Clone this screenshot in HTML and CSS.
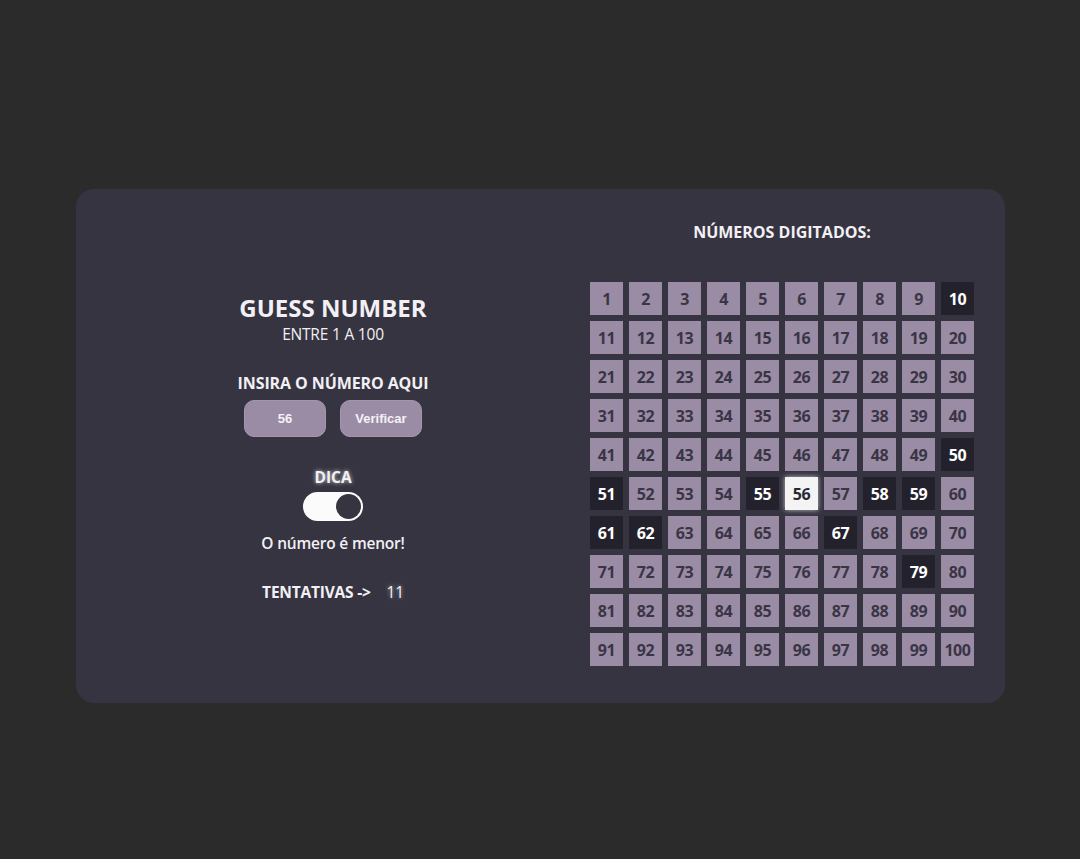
FILE: index.html
```html
<!DOCTYPE html>
<html lang="pt-BR">
<head>
<meta charset="utf-8">
<title>Guess Number</title>
<link rel="stylesheet" href="styles.css">
</head>
<body>
<main class="card">
  <section class="left">
    <h1 class="title">GUESS NUMBER</h1>
    <p class="subtitle">ENTRE 1 A 100</p>
    <h2 class="label">INSIRA O NÚMERO AQUI</h2>
    <div class="controls">
      <div class="input">56</div>
      <button class="btn">Verificar</button>
    </div>
    <h3 class="hint-label">DICA</h3>
    <div class="toggle"><span class="knob"></span></div>
    <p class="hint">O número é menor!</p>
    <p class="tries">TENTATIVAS -&gt; <span class="count">11</span></p>
  </section>
  <section class="right">
    <h2 class="grid-title">NÚMEROS DIGITADOS:</h2>
    <div class="grid" id="grid"></div>
  </section>
</main>
<script src="script.js"></script>
</body>
</html>
```
FILE: script.js
```js
(function () {
  var used = [10, 50, 51, 55, 58, 59, 61, 62, 67, 79];
  var grid = document.getElementById('grid');
  for (var i = 1; i <= 100; i++) {
    var d = document.createElement('div');
    d.className = 'cell';
    if (used.indexOf(i) !== -1) d.className += ' used';
    if (i === 56) d.className += ' current';
    d.textContent = i;
    grid.appendChild(d);
  }
})();
```
FILE: styles.css
```css
* { box-sizing: border-box; }
html, body { margin: 0; padding: 0; }
body {
  background: #2b2b2b;
  width: 1080px;
  height: 859px;
  font-family: "Open Sans", "Noto Sans", sans-serif;
  color: #f2f0f5;
  padding-top: 189px;
}
.card {
  margin-left: 76px;
  width: 929px;
  height: 514px;
  background: #363440;
  border-radius: 18px;
  display: flex;
  padding: 0 31px;
  gap: 31px;
}
.left {
  flex: 1;
  display: flex;
  flex-direction: column;
  align-items: center;
  justify-content: center;
  padding-top: 4px;
}
.title {
  margin: 0;
  font-size: 24px;
  font-weight: 700;
  line-height: 30px;
  letter-spacing: 0;
}
.subtitle {
  margin: 0;
  font-size: 15.5px;
  line-height: 22px;
  letter-spacing: -0.2px;
}
.label {
  margin: 27px 0 0;
  font-size: 16px;
  font-weight: 700;
  line-height: 22px;
  letter-spacing: -0.1px;
}
.controls {
  display: flex;
  gap: 14px;
  margin-top: 6px;
}
.input, .btn {
  width: 82px;
  height: 37px;
  border-radius: 10px;
  background: #9a8ca5;
  border: 1px solid #a497ad;
  color: #f4f2f6;
  font-family: "Liberation Sans", Arial, sans-serif;
  font-weight: 700;
  font-size: 13px;
  display: flex;
  align-items: center;
  justify-content: center;
  padding: 0;
}
.hint-label {
  margin: 29px 0 0;
  font-size: 15.5px;
  font-weight: 700;
  line-height: 22px;
  text-shadow: 0 0 4px rgba(255,255,255,0.75);
}
.toggle {
  width: 60px;
  height: 29px;
  background: #fbfbfb;
  border-radius: 15px;
  display: flex;
  align-items: center;
  justify-content: flex-end;
  padding: 0 2px;
  margin-top: 4px;
}
.knob {
  width: 25px;
  height: 25px;
  border-radius: 50%;
  background: #363440;
}
.hint {
  margin: 11px 0 0;
  font-size: 15.5px;
  font-weight: 600;
  line-height: 22px;
  letter-spacing: -0.2px;
}
.tries {
  margin: 27px 0 0;
  font-size: 15.5px;
  font-weight: 700;
  line-height: 22px;
  letter-spacing: -0.2px;
}
.count {
  font-weight: 400;
  margin-left: 12px;
  text-shadow: 0 0 4px rgba(255,255,255,0.6);
}
.right {
  width: 384px;
  display: flex;
  flex-direction: column;
  align-items: center;
}
.grid-title {
  margin: 32px 0 0;
  font-size: 16px;
  font-weight: 700;
  line-height: 22px;
  letter-spacing: 0;
}
.grid {
  margin-top: 39px;
  display: grid;
  grid-template-columns: repeat(10, 33px);
  grid-auto-rows: 33px;
  gap: 6px;
}
.cell {
  background: #9a8ca5;
  color: #3a3545;
  font-weight: 700;
  font-size: 16px;
  display: flex;
  align-items: center;
  justify-content: center;
  letter-spacing: -0.4px;
}
.cell.used {
  background: #23212c;
  color: #ffffff;
}
.cell.current {
  background: #f4f4f4;
  color: #2a2733;
  box-shadow: 0 0 5px rgba(255,255,255,0.7);
}
```
